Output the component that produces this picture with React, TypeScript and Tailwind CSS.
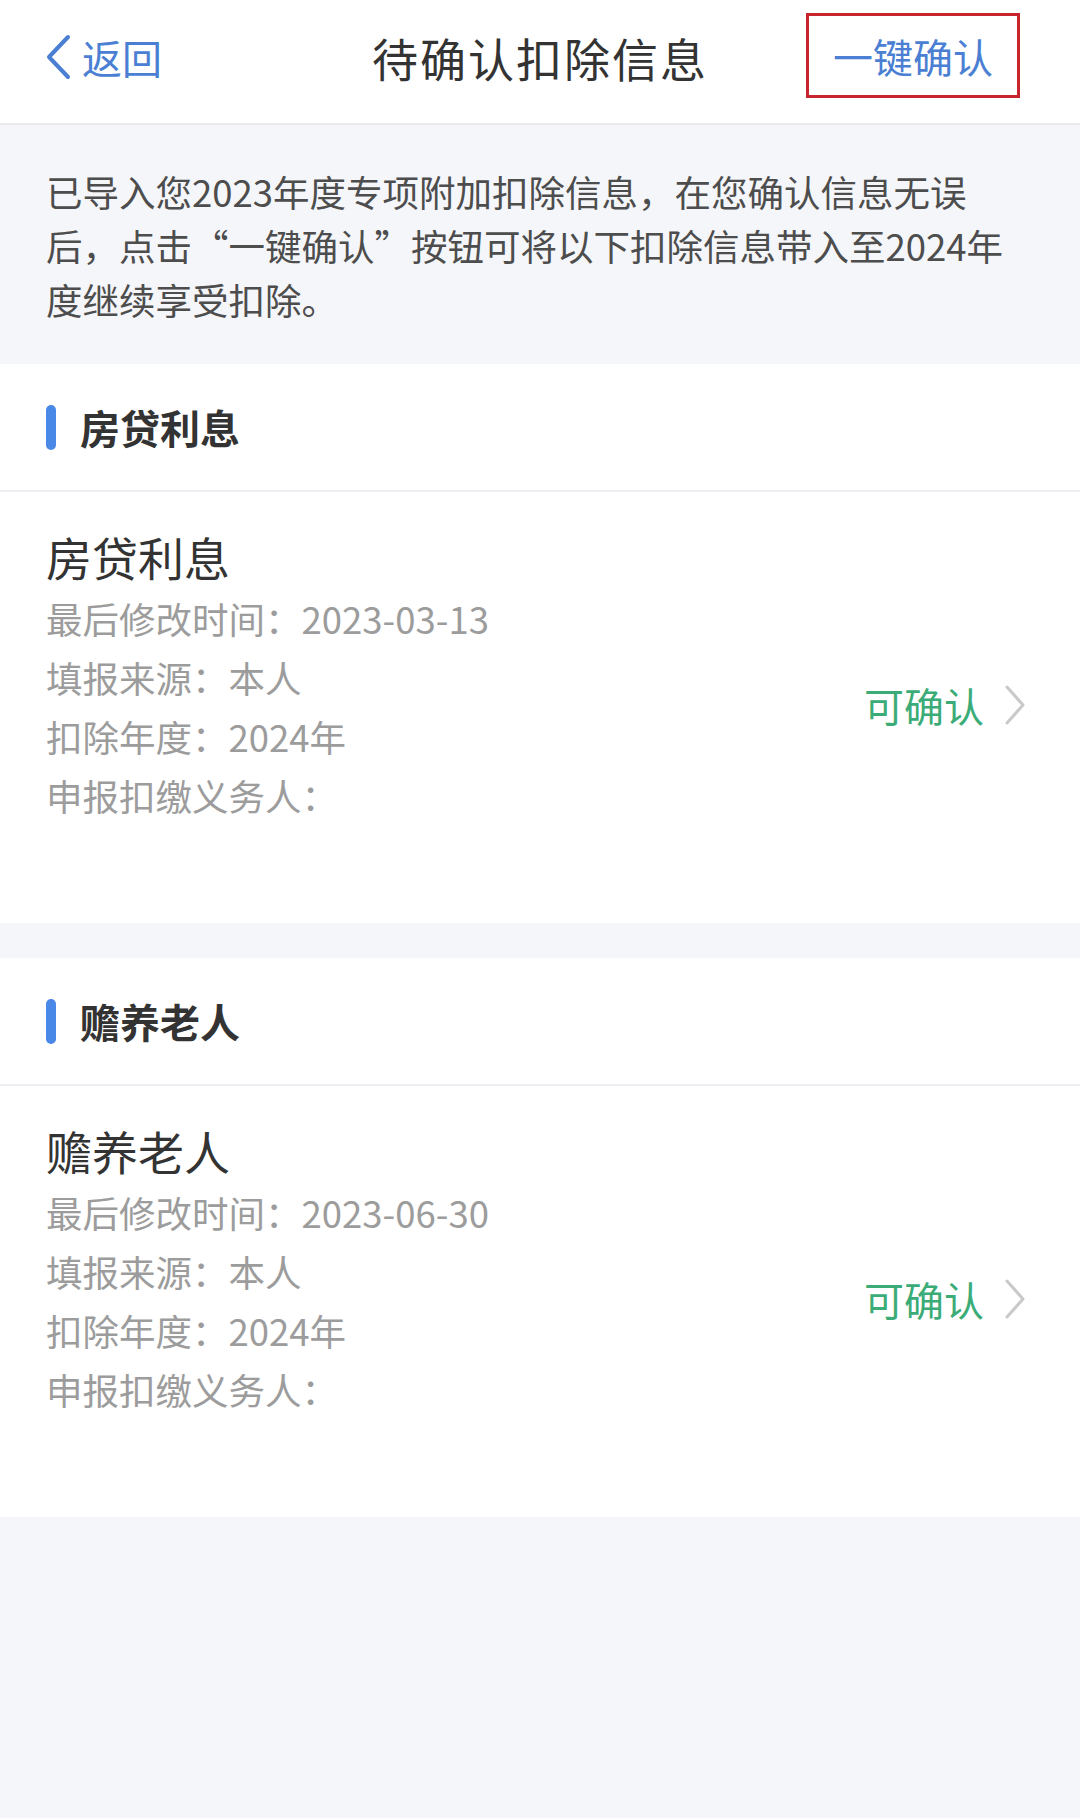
import React from "react";

const font = { fontFamily: '"Noto Sans CJK SC", "Noto Sans", sans-serif' };

interface Item {
  title: string;
  modified: string;
  source: string;
  year: string;
}

const items: Item[] = [
  { title: "房贷利息", modified: "2023-03-13", source: "本人", year: "2024年" },
  { title: "赡养老人", modified: "2023-06-30", source: "本人", year: "2024年" },
];

function Header() {
  return (
    <div className="grid grid-cols-[1fr_auto_1fr] items-center h-[125px] pb-[10px] bg-white border-b-2 border-[#e9e9ee]">
      <div className="flex items-center pl-[44px] gap-[10px] text-[#4a7fd3]">
        <svg width="28" height="48" viewBox="0 0 28 48" fill="none">
          <path d="M24 4 L5 24 L24 44" stroke="#4a7fd3" strokeWidth="4" strokeLinecap="round" strokeLinejoin="round" />
        </svg>
        <span className="text-[40px] leading-none">返回</span>
      </div>
      <h1 className="text-[46px] leading-none text-[#333333] tracking-[2px]">待确认扣除信息</h1>
      <div className="flex justify-end pr-[60px]">
        <div className="h-[85px] px-[24px] flex items-center border-[3px] border-[#c8242d] -mt-[2px]">
          <span className="text-[40px] leading-none text-[#4a7fd3]">一键确认</span>
        </div>
      </div>
    </div>
  );
}

function Section({ item }: { item: Item }) {
  return (
    <div className="bg-white">
      <div className="h-[128px] flex items-center pl-[46px] gap-[24px] border-b-2 border-[#eeeef2]">
        <div className="w-[10px] h-[45px] rounded-full bg-[#4a88e8]" />
        <span className="text-[40px] font-bold text-[#333333] leading-none">{item.title}</span>
      </div>
      <div className="flex items-center pl-[46px] pr-[54px] pt-[34px] pb-[39px]">
        <div className="flex-1">
          <div className="text-[46px] leading-[60px] text-[#333333]">{item.title}</div>
          <div className="mt-[3px] text-[36.5px] leading-[59px] text-[#9c9c9c]">
            <div>最后修改时间：{item.modified}</div>
            <div>填报来源：{item.source}</div>
            <div>扣除年度：{item.year}</div>
            <div>申报扣缴义务人：</div>
            <div className="h-[59px]" />
          </div>
        </div>
        <div className="flex items-center gap-[20px]">
          <span className="text-[40px] leading-none text-[#3bac78]">可确认</span>
          <svg width="22" height="42" viewBox="0 0 22 42" fill="none">
            <path d="M3 3 L19 21 L3 39" stroke="#c9c9c9" strokeWidth="3" strokeLinecap="round" strokeLinejoin="round" />
          </svg>
        </div>
      </div>
    </div>
  );
}

export default function App() {
  return (
    <div className="w-[1080px] min-h-[1818px] bg-[#f5f6fa]" style={font}>
      <Header />
      <div className="pl-[46px] pr-[40px] pt-[40px] pb-[37px] text-[36.5px] leading-[54px] text-[#4d4d4d]">
        <div className="whitespace-nowrap">已导入您2023年度专项附加扣除信息，在您确认信息无误</div>
        <div className="whitespace-nowrap">后，点击“一键确认”按钮可将以下扣除信息带入至2024年</div>
        <div className="whitespace-nowrap">度继续享受扣除。</div>
      </div>
      <div className="flex flex-col gap-[35px]">
        {items.map((it) => (
          <Section key={it.title} item={it} />
        ))}
      </div>
    </div>
  );
}
